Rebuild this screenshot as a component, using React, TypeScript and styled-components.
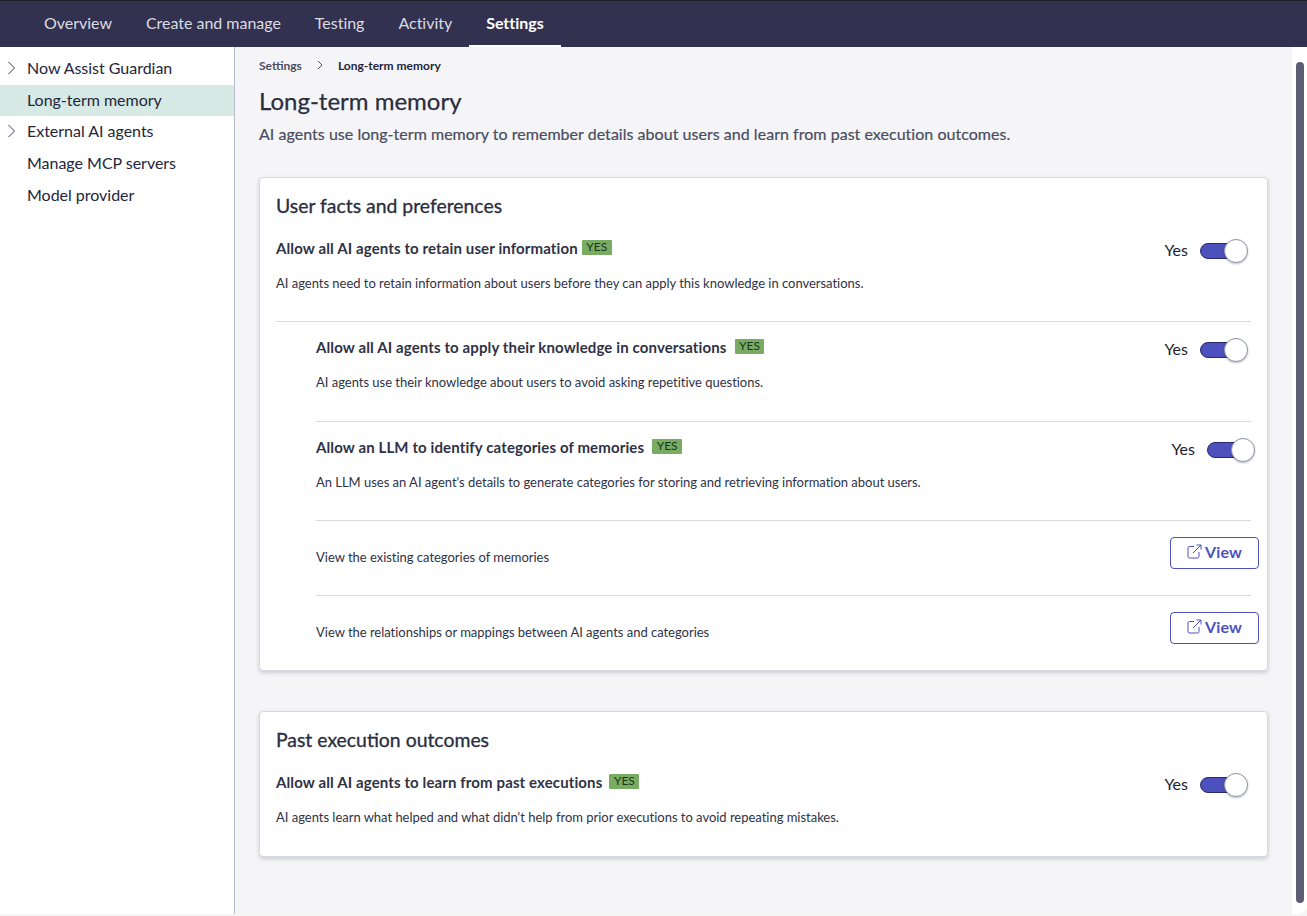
import styled, { createGlobalStyle } from 'styled-components'

const GlobalStyle = createGlobalStyle`
  html, body {
    margin: 0;
    padding: 0;
    height: 100%;
    overflow: hidden;
    background: #f5f5f6;
    font-family: Lato, "Open Sans", sans-serif;
  }
  * {
    box-sizing: border-box;
  }
`

const Page = styled.div`
  width: 1307px;
  height: 914px;
  display: flex;
  flex-direction: column;
  overflow: hidden;
  background: #ffffff;
  border-bottom-right-radius: 9px;
`

const TopBar = styled.nav`
  height: 47px;
  flex: none;
  display: flex;
  padding-left: 27px;
  background: #32314f;
  border-top: 1px solid #1d1f2b;
`

const Tab = styled.div<{ $active?: boolean }>`
  height: 46px;
  padding: 0 17px 2px;
  display: flex;
  align-items: center;
  font-size: 16px;
  letter-spacing: -0.02px;
  font-weight: ${(p) => (p.$active ? 700 : 400)};
  color: ${(p) => (p.$active ? '#ffffff' : '#dcdce4')};
  border-bottom: 2px solid ${(p) => (p.$active ? '#ffffff' : 'transparent')};
`

const Body = styled.div`
  flex: 1;
  display: flex;
  min-height: 0;
`

const Sidebar = styled.aside`
  width: 235px;
  flex: none;
  padding-top: 6px;
  background: #ffffff;
  border-right: 1px solid #b9bccb;
`

const SideItem = styled.div<{ $active?: boolean }>`
  position: relative;
  height: 31.6px;
  padding: 0 0 2px 27px;
  display: flex;
  align-items: center;
  font-size: 16px;
  letter-spacing: -0.02px;
  color: #23263a;
  background: ${(p) => (p.$active ? '#d6e9e4' : 'transparent')};
`

const Chevron = styled.svg`
  position: absolute;
  left: 7px;
  top: 8px;
  width: 9px;
  height: 14px;
`

const Main = styled.main`
  flex: 1;
  padding: 0 24px;
  background: #f5f5f8;
`

const Crumbs = styled.div`
  height: 36px;
  display: flex;
  align-items: center;
  font-size: 12px;
  font-weight: 700;
  color: #23263a;
`

const CrumbLink = styled.span`
  color: #4a4d60;
`

const CrumbSep = styled.svg`
  width: 6px;
  height: 10px;
  margin: 0 15px;
`

const PageTitle = styled.h1`
  margin: 3px 0 0;
  font-size: 24px;
  line-height: 30px;
  font-weight: 400;
  -webkit-text-stroke: 0.25px #2a2d3e;
  color: #2a2d3e;
`

const Lead = styled.p`
  margin: 8px 0 0;
  font-size: 16px;
  line-height: 20px;
  font-weight: 400;
  letter-spacing: 0.03px;
  -webkit-text-stroke: 0.2px #4a4d60;
  color: #4a4d60;
`

const Card = styled.section<{ $height: number }>`
  height: ${(p) => p.$height}px;
  padding: 0 16px;
  background: #ffffff;
  border: 1px solid #d6d8e2;
  border-radius: 4px;
  box-shadow: 0 2px 4px rgba(40, 44, 70, 0.2);
`

const FirstCard = styled(Card)`
  margin-top: 33px;
`

const SecondCard = styled(Card)`
  margin-top: 40px;
`

const CardTitle = styled.h2`
  margin: 0;
  padding-top: 14px;
  font-size: 19.4px;
  line-height: 27px;
  font-weight: 400;
  -webkit-text-stroke: 0.3px #2a2d3e;
  color: #2a2d3e;
`

const Setting = styled.div<{ $indent?: boolean; $height: number; $divider?: boolean }>`
  position: relative;
  height: ${(p) => p.$height}px;
  margin-left: ${(p) => (p.$indent ? 40 : 0)}px;
  border-bottom: ${(p) => (p.$divider ? '1px solid #d6d8e2' : 'none')};
`

const SettingHead = styled.div`
  display: flex;
  align-items: center;
  gap: 4px;
  font-size: 15px;
  line-height: 20px;
  font-weight: 700;
  letter-spacing: 0.12px;
  color: #2f3245;
`

const SettingTop = styled.div<{ $top: number }>`
  padding-top: ${(p) => p.$top}px;
`

const Badge = styled.span<{ $gap?: number }>`
  height: 15px;
  margin-left: ${(p) => p.$gap ?? 0}px;
  margin-top: -2px;
  padding: 0 4.5px;
  display: inline-flex;
  align-items: center;
  font-size: 12px;
  font-weight: 400;
  letter-spacing: 0;
  color: #17381a;
  background: #79ac62;
  border-radius: 1px;
`

const Desc = styled.p`
  margin: 15px 0 0;
  font-size: 13px;
  line-height: 20px;
  letter-spacing: -0.02px;
  color: #2f3245;
`

const ToggleWrap = styled.div<{ $right: number; $top: number }>`
  position: absolute;
  right: ${(p) => p.$right}px;
  top: ${(p) => p.$top}px;
  display: flex;
  align-items: center;
  gap: 12px;
  font-size: 16px;
  color: #1c1e2e;
`

const ToggleLabel = styled.span`
  padding-bottom: 4px;
`

const Track = styled.div`
  position: relative;
  width: 48px;
  height: 24px;
  display: flex;
  align-items: center;
`

const TrackBar = styled.div`
  width: 34px;
  height: 16px;
  background: #4c51bd;
  border: 1px solid #282a6e;
  border-radius: 8px;
`

const Knob = styled.div`
  position: absolute;
  right: 0;
  top: 0;
  width: 24px;
  height: 24px;
  background: #ffffff;
  border: 1px solid #8f93a8;
  border-radius: 50%;
  box-shadow: 0 1px 2px rgba(30, 30, 60, 0.3);
`

const LinkRow = styled.div<{ $divider?: boolean }>`
  height: 75px;
  margin-left: 40px;
  padding-bottom: 2px;
  display: flex;
  align-items: center;
  justify-content: space-between;
  font-size: 13px;
  letter-spacing: -0.02px;
  color: #2f3245;
  border-bottom: 1px solid ${(p) => (p.$divider ? '#d6d8e2' : 'transparent')};
`

const ViewButton = styled.button`
  width: 89px;
  height: 32px;
  margin: 0 -8px 8px 0;
  padding: 0 0 3px;
  display: flex;
  align-items: center;
  justify-content: center;
  gap: 3px;
  font-family: inherit;
  font-size: 16px;
  font-weight: 700;
  letter-spacing: 0.2px;
  color: #4c51bd;
  background: #ffffff;
  border: 1px solid #4c51bd;
  border-radius: 4px;
`

const ScrollTrack = styled.div`
  width: 15px;
  flex: none;
  padding: 15px 3px 11px 4px;
  background: #ffffff;
`

const ScrollThumb = styled.div`
  height: 100%;
  background: #5f5d74;
  border-radius: 4px;
`

const tabs = ['Overview', 'Create and manage', 'Testing', 'Activity']

const ChevronIcon = () => (
  <Chevron viewBox="0 0 9 14" fill="none" stroke="#3a3d50" strokeWidth="1">
    <path d="M1.5 1 L7.5 7 L1.5 13" />
  </Chevron>
)

const ExternalIcon = () => (
  <svg width="15" height="15" viewBox="0 0 15 15" fill="none" stroke="#4c51bd" strokeWidth="1">
    <path d="M7 2.5H2.5a1.5 1.5 0 0 0-1.5 1.5v8.5a1.5 1.5 0 0 0 1.5 1.5h8a1.5 1.5 0 0 0 1.5-1.5V8" />
    <path d="M6 9L14 1M9.5 1H14V5.5" />
  </svg>
)

const Toggle = ({ right = 3, top }: { right?: number; top: number }) => (
  <ToggleWrap $right={right} $top={top}>
    <ToggleLabel>Yes</ToggleLabel>
    <Track>
      <TrackBar />
      <Knob />
    </Track>
  </ToggleWrap>
)

const App = () => {
  return (
    <>
      <GlobalStyle />
      <Page>
        <TopBar>
          {tabs.map((t) => (
            <Tab key={t}>{t}</Tab>
          ))}
          <Tab $active>Settings</Tab>
        </TopBar>
        <Body>
          <Sidebar>
            <SideItem>
              <ChevronIcon />
              Now Assist Guardian
            </SideItem>
            <SideItem $active>Long-term memory</SideItem>
            <SideItem>
              <ChevronIcon />
              External AI agents
            </SideItem>
            <SideItem>Manage MCP servers</SideItem>
            <SideItem>Model provider</SideItem>
          </Sidebar>
          <Main>
            <Crumbs>
              <CrumbLink>Settings</CrumbLink>
              <CrumbSep viewBox="0 0 6 10" fill="none" stroke="#4a4d60" strokeWidth="1">
                <path d="M1 1 L5 5 L1 9" />
              </CrumbSep>
              Long-term memory
            </Crumbs>
            <PageTitle>Long-term memory</PageTitle>
            <Lead>AI agents use long-term memory to remember details about users and learn from past execution outcomes.</Lead>

            <FirstCard $height={494}>
              <CardTitle>User facts and preferences</CardTitle>
              <Setting $height={103} $divider>
                <SettingTop $top={19}>
                  <SettingHead>
                    Allow all AI agents to retain user information
                    <Badge>YES</Badge>
                  </SettingHead>
                  <Desc>AI agents need to retain information about users before they can apply this knowledge in conversations.</Desc>
                </SettingTop>
                <Toggle top={20} />
              </Setting>
              <Setting $indent $divider $height={100}>
                <SettingTop $top={15}>
                  <SettingHead>
                    Allow all AI agents to apply their knowledge in conversations
                    <Badge $gap={4}>YES</Badge>
                  </SettingHead>
                  <Desc>AI agents use their knowledge about users to avoid asking repetitive questions.</Desc>
                </SettingTop>
                <Toggle top={16} />
              </Setting>
              <Setting $indent $divider $height={99}>
                <SettingTop $top={15}>
                  <SettingHead>
                    Allow an LLM to identify categories of memories
                    <Badge $gap={4}>YES</Badge>
                  </SettingHead>
                  <Desc>An LLM uses an AI agent's details to generate categories for storing and retrieving information about users.</Desc>
                </SettingTop>
                <Toggle right={-4} top={16} />
              </Setting>
              <LinkRow $divider>
                View the existing categories of memories
                <ViewButton>
                  <ExternalIcon />
                  View
                </ViewButton>
              </LinkRow>
              <LinkRow>
                View the relationships or mappings between AI agents and categories
                <ViewButton>
                  <ExternalIcon />
                  View
                </ViewButton>
              </LinkRow>
            </FirstCard>

            <SecondCard $height={146}>
              <CardTitle>Past execution outcomes</CardTitle>
              <Setting $height={100}>
                <SettingTop $top={19}>
                  <SettingHead>
                    Allow all AI agents to learn from past executions
                    <Badge $gap={3}>YES</Badge>
                  </SettingHead>
                  <Desc>AI agents learn what helped and what didn't help from prior executions to avoid repeating mistakes.</Desc>
                </SettingTop>
                <Toggle top={20} />
              </Setting>
            </SecondCard>
          </Main>
          <ScrollTrack>
            <ScrollThumb />
          </ScrollTrack>
        </Body>
      </Page>
    </>
  )
}

export default App
